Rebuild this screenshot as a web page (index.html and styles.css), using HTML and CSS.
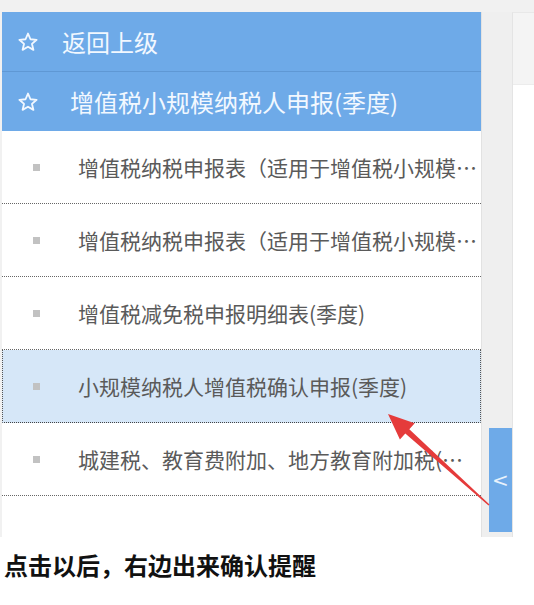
FILE: index.html
```html
<!DOCTYPE html>
<html lang="zh-CN">
<head>
<meta charset="UTF-8">
<meta name="viewport" content="width=device-width, initial-scale=1.0">
<title>增值税小规模纳税人申报</title>
<link rel="stylesheet" href="styles.css">
</head>
<body>
<div class="screen">
    <!-- 左侧菜单 -->
    <div class="menu">
        <div class="menu-head back">
            <svg class="star" viewBox="0 0 24 24"><path d="M12 2.8l2.7 6.2 6.7.6-5.1 4.4 1.6 6.6L12 17.1l-5.9 3.5 1.6-6.6-5.1-4.4 6.7-.6z"/></svg>
            <span>返回上级</span>
        </div>
        <div class="menu-head current">
            <svg class="star" viewBox="0 0 24 24"><path d="M12 2.8l2.7 6.2 6.7.6-5.1 4.4 1.6 6.6L12 17.1l-5.9 3.5 1.6-6.6-5.1-4.4 6.7-.6z"/></svg>
            <span>增值税小规模纳税人申报(季度)</span>
        </div>
        <ul class="items">
            <li><i class="dot"></i><span>增值税纳税申报表（适用于增值税小规模纳税人）</span></li>
            <li><i class="dot"></i><span>增值税纳税申报表（适用于增值税小规模纳税人）附列资料</span></li>
            <li><i class="dot"></i><span>增值税减免税申报明细表(季度)</span></li>
            <li class="active"><i class="dot"></i><span>小规模纳税人增值税确认申报(季度)</span></li>
            <li><i class="dot"></i><span>城建税、教育费附加、地方教育附加税(费)申报表</span></li>
        </ul>
    </div>

    <!-- 收起按钮 -->
    <div class="gutter">
        <button class="toggle">&lt;</button>
    </div>

    <!-- 右侧面板 -->
    <div class="side">
        <div class="side-top"></div>
    </div>
</div>

<p class="caption">点击以后，右边出来确认提醒</p>

<svg class="arrow" viewBox="0 0 534 605" width="534" height="605">
    <polygon points="388,414 414.7,423.2 409.3,429.2 489.5,504.5 488.5,505.5 405.3,433.6 399.9,439.6"/>
</svg>
</body>
</html>
```

FILE: styles.css
```css
body {
    margin: 0; background: #fff;
    font-family: "Noto Sans CJK SC", "Noto Sans", sans-serif;
    position: relative;
}

.screen {
    display: flex; height: 537px; box-sizing: border-box;
    padding: 12px 0 0 2px; background: #f1f1f1;
}

/* 菜单 */
.menu { width: 479px; background: #fff; flex-shrink: 0; }

.menu-head {
    display: flex; align-items: center; height: 59px;
    background: #6eaae8; color: #f2f8ff; font-size: 24px;
    padding-left: 15px;
}
.menu-head.back { border-bottom: 1px solid #5f98d4; }
.menu-head .star {
    width: 22px; height: 22px; fill: none;
    stroke: #f2f8ff; stroke-width: 2; stroke-linejoin: round;
}
.menu-head.back span { margin-left: 23px; }
.menu-head.current span { margin-left: 31px; }

.items { list-style: none; margin: 0; padding: 0; }
.items li {
    display: flex; align-items: center; height: 72px;
    border-bottom: 1px dotted #666;
    color: #5a5a5a; font-size: 21px;
    padding-left: 31px; padding-right: 2px;
}
.items li.active {
    background: #d6e7f8;
    border-left: 1px dotted #555; border-right: 1px dotted #555;
    border-bottom-color: #444;
    padding-left: 30px; padding-right: 1px;
}
.items .dot {
    width: 7px; height: 7px; background: #c2c2c2;
    flex-shrink: 0; margin-right: 38px;
}
.items span {
    white-space: nowrap; overflow: hidden; text-overflow: ellipsis;
}

/* 中间条 */
.gutter {
    width: 31px; flex-shrink: 0; box-sizing: border-box;
    border-left: 1px solid #e2e2e2; background: #efefef;
    padding: 416px 0 0 7px;
}
.toggle {
    display: block; width: 23px; height: 104px; padding: 0;
    border: none; background: #6eaae8; color: #e8f2fc;
    font-size: 20px; font-family: "DejaVu Sans", sans-serif;
}

/* 右侧面板 */
.side {
    flex: 1; background: #fff;
    border-left: 1px solid #e4e4e4; border-top: 1px solid #e8e8e8;
}
.side-top { height: 71px; background: #f4f4f4; border-bottom: 1px solid #ececec; }

.caption {
    margin: 0; padding-left: 4px;
    font-size: 24px; font-weight: bold; line-height: 56px; color: #111;
}

.arrow { position: absolute; top: 0; left: 0; pointer-events: none; }
.arrow polygon { fill: #e53b3b; }
```
